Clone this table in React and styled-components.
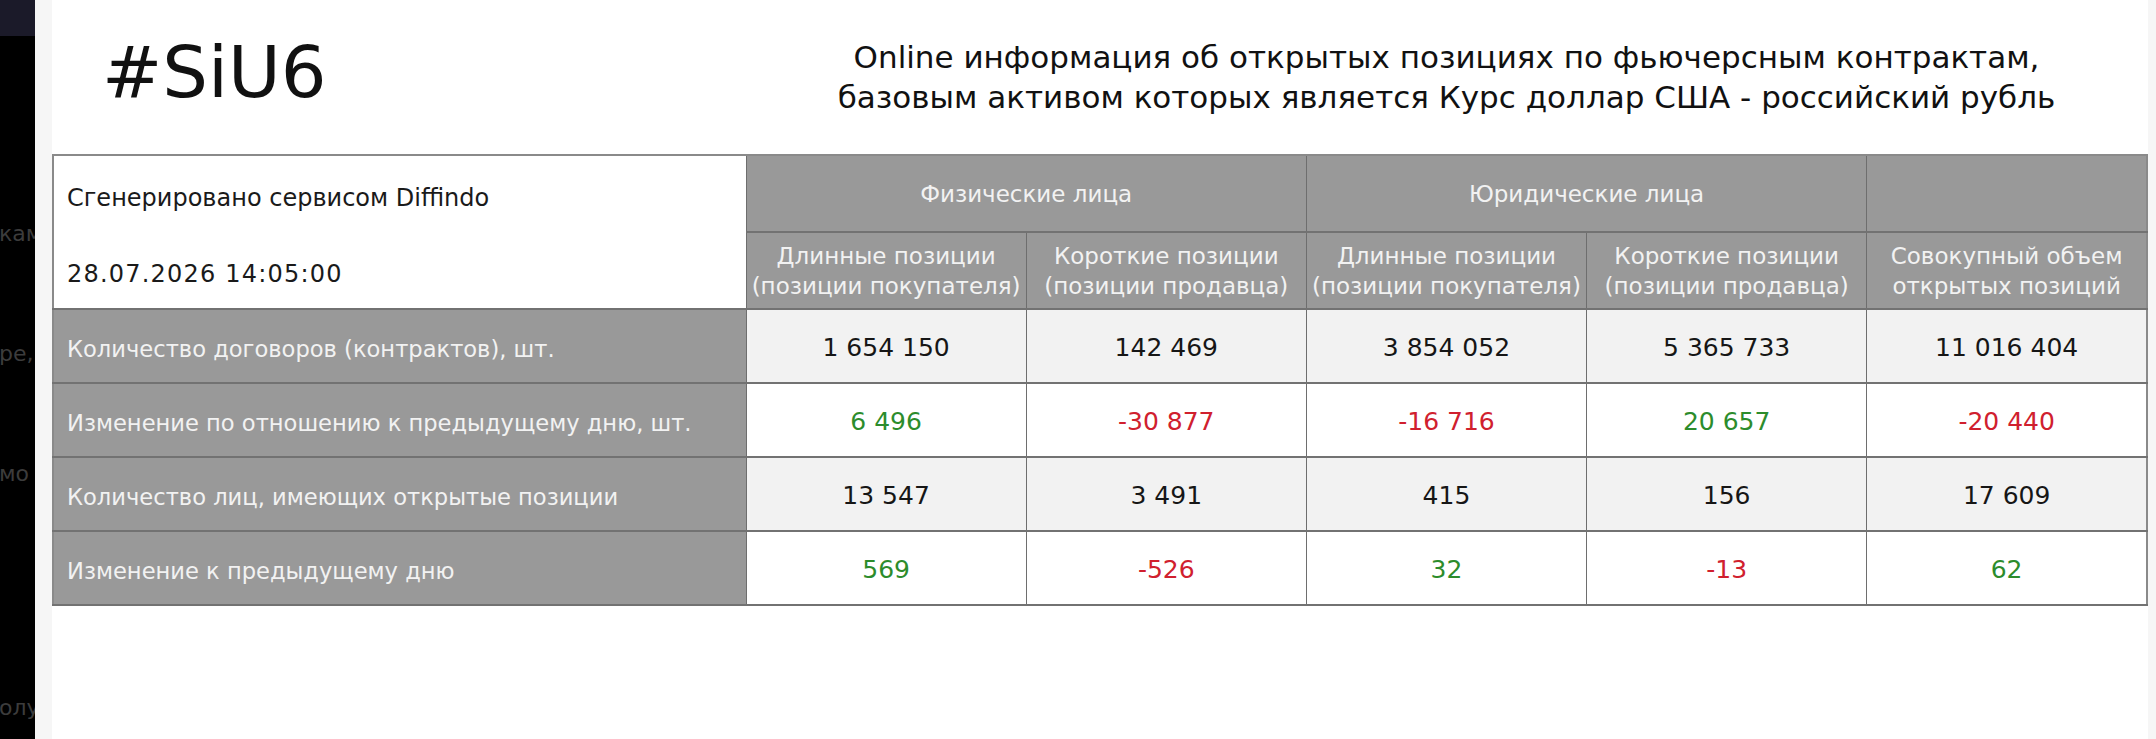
import React from 'react'
import styled, { createGlobalStyle } from 'styled-components'

const GlobalStyle = createGlobalStyle`
    html, body {
        margin:0;
        padding:0;
        background:#f6f6f6;
    }
    body {
        font-family:"DejaVu Sans", Verdana, sans-serif;
    }
`

const Page = styled.div`
    display:flex;
    min-height:739px;
    background:#f6f6f6;
    overflow:hidden;
`

const Sidebar = styled.aside`
    width:35px;
    flex-shrink:0;
    background:#000;
    display:flex;
    flex-direction:column;
    overflow:hidden;
`

const SidebarTop = styled.div`
    height:36px;
    background:#1b1a29;
`

const SideList = styled.nav`
    padding-top:137px;
    display:flex;
    flex-direction:column;
`

const SideItem = styled.div`
    height:120px;
    margin-top:${props => props.$offset || 0}px;
    display:flex;
    align-items:center;
    font-size:22px;
    color:#3c3c3c;
    white-space:nowrap;
    margin-left:-1px;
`

const Main = styled.div`
    flex:1;
    padding:0 8px 0 17px;
`

const Card = styled.main`
    background:#fff;
    min-height:739px;
`

const Header = styled.header`
    display:grid;
    grid-template-columns:693px 1fr;
    height:154px;
`

const Title = styled.h1`
    margin:0;
    padding:36px 0 0 50px;
    font-size:72px;
    line-height:1;
    font-weight:normal;
    color:#111;
`

const Subtitle = styled.p`
    margin:0;
    padding-top:37px;
    font-size:31px;
    line-height:40px;
    text-align:center;
    color:#111;
`

const Table = styled.table`
    width:100%;
    border-collapse:collapse;
    table-layout:fixed;
    border:2px solid #8a8a8a;
`

const HeadCell = styled.th`
    height:76px;
    padding:0 2px;
    background:#999;
    color:#f2f2f2;
    font-weight:normal;
    font-size:23px;
    line-height:30px;
    text-align:center;
    white-space:nowrap;
    border:1px solid #6e6e6e;
    border-bottom:2px solid #727272;
    box-sizing:border-box;
`

const InfoCell = styled.td`
    padding:0 13px;
    background:#fff;
    vertical-align:top;
    border-bottom:2px solid #727272;
`

const InfoLine = styled.div`
    height:76px;
    display:flex;
    align-items:center;
    padding-top:8px;
    box-sizing:border-box;
    font-size:24px;
    letter-spacing:${props => props.$wide ? '1.2px' : 'normal'};
    color:#1a1a1a;
`

const RowLabel = styled.th`
    height:74px;
    padding:6px 0 0 13px;
    background:#999;
    color:#f2f2f2;
    font-weight:normal;
    font-size:22.6px;
    text-align:left;
    white-space:nowrap;
    border-bottom:2px solid #727272;
    box-sizing:border-box;
`

const ValueCell = styled.td`
    text-align:center;
    font-size:25px;
    padding-top:4px;
    background:${props => props.$shaded ? '#f2f2f2' : '#fff'};
    color:${props => props.$tone === 'up' ? '#2c8c2c' : props.$tone === 'down' ? '#d0202e' : '#161616'};
    border-left:1px solid #6e6e6e;
    border-bottom:2px solid #727272;
`

const rows = [
    { label: 'Количество договоров (контрактов), шт.', values: ['1 654 150', '142 469', '3 854 052', '5 365 733', '11 016 404'] },
    { label: 'Изменение по отношению к предыдущему дню, шт.', values: ['6 496', '-30 877', '-16 716', '20 657', '-20 440'], signed: true },
    { label: 'Количество лиц, имеющих открытые позиции', values: ['13 547', '3 491', '415', '156', '17 609'] },
    { label: 'Изменение к предыдущему дню', values: ['569', '-526', '32', '-13', '62'], signed: true },
]

const toneOf = (value, signed) => {
    if (!signed) return null
    return value.startsWith('-') ? 'down' : 'up'
}

export default function App() {
    return (
        <>
            <GlobalStyle />
            <Page>
                <Sidebar>
                    <SidebarTop />
                    <SideList>
                        <SideItem>кам</SideItem>
                        <SideItem>ре,</SideItem>
                        <SideItem>мо</SideItem>
                        <SideItem $offset={114}>олу</SideItem>
                    </SideList>
                </Sidebar>
                <Main>
                    <Card>
                        <Header>
                            <Title>#SiU6</Title>
                            <Subtitle>
                                Online информация об открытых позициях по фьючерсным контрактам,<br />
                                базовым активом которых является Курс доллар США - российский рубль
                            </Subtitle>
                        </Header>
                        <Table>
                            <colgroup>
                                <col style={{ width: '693px' }} />
                                <col />
                                <col />
                                <col />
                                <col />
                                <col />
                            </colgroup>
                            <thead>
                                <tr>
                                    <InfoCell rowSpan={2}>
                                        <InfoLine>Сгенерировано сервисом Diffindo</InfoLine>
                                        <InfoLine $wide>28.07.2026 14:05:00</InfoLine>
                                    </InfoCell>
                                    <HeadCell colSpan={2}>Физические лица</HeadCell>
                                    <HeadCell colSpan={2}>Юридические лица</HeadCell>
                                    <HeadCell></HeadCell>
                                </tr>
                                <tr>
                                    <HeadCell>Длинные позиции<br />(позиции покупателя)</HeadCell>
                                    <HeadCell>Короткие позиции<br />(позиции продавца)</HeadCell>
                                    <HeadCell>Длинные позиции<br />(позиции покупателя)</HeadCell>
                                    <HeadCell>Короткие позиции<br />(позиции продавца)</HeadCell>
                                    <HeadCell>Совокупный объем<br />открытых позиций</HeadCell>
                                </tr>
                            </thead>
                            <tbody>
                                {rows.map((row, i) => (
                                    <tr key={row.label}>
                                        <RowLabel scope="row">{row.label}</RowLabel>
                                        {row.values.map((v, j) => (
                                            <ValueCell key={j} $shaded={i % 2 === 0} $tone={toneOf(v, row.signed)}>{v}</ValueCell>
                                        ))}
                                    </tr>
                                ))}
                            </tbody>
                        </Table>
                    </Card>
                </Main>
            </Page>
        </>
    )
}
